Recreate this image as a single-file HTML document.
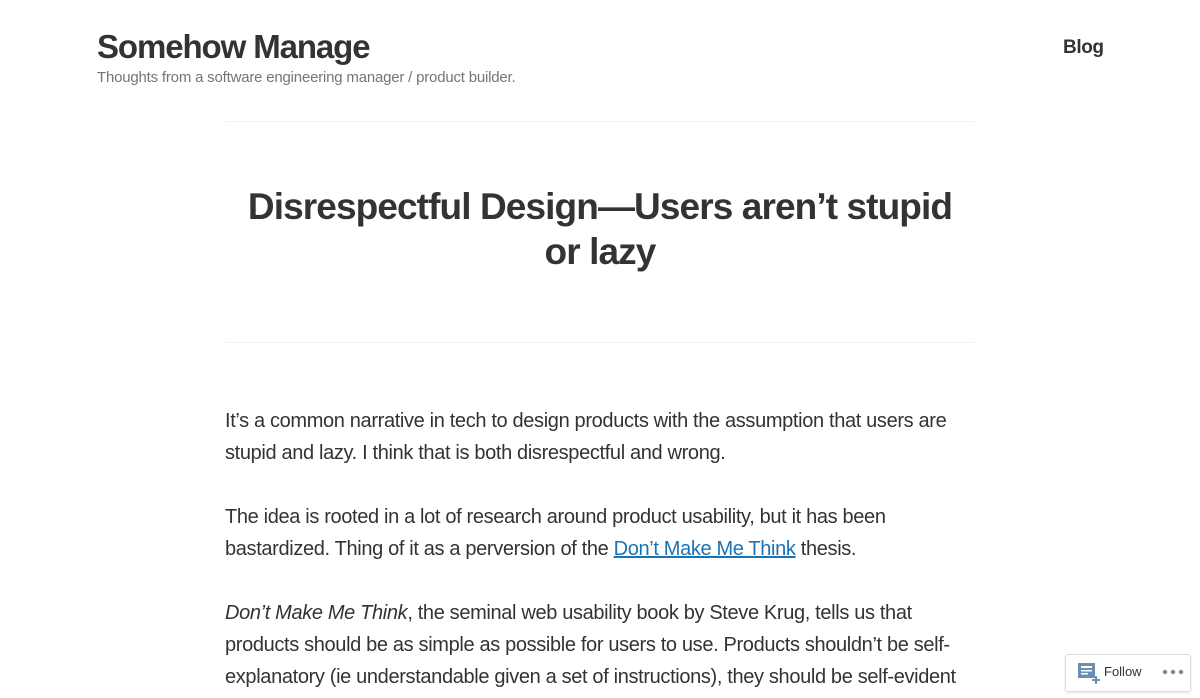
<!DOCTYPE html>
<html><head><meta charset="utf-8"><style>
body{margin:0;background:#fff;width:1200px;height:698px;overflow:hidden;font-family:"Liberation Sans",sans-serif;color:#333;position:relative}
.a{position:absolute;white-space:nowrap}
.t{left:97px;top:28px;font-size:33px;font-weight:bold;color:#333;letter-spacing:-1.1px}
.s{left:97px;top:69px;font-size:15px;color:#757575;letter-spacing:-0.2px}
.blog{left:1063px;top:37px;font-size:19px;font-weight:bold;letter-spacing:-0.4px}
.hr{position:absolute;left:225px;width:750px;height:1px;background:#f0f0f0}
.h{left:0;width:1200px;text-align:center;font-size:37px;font-weight:bold;letter-spacing:-0.9px;color:#333}
.p{left:225px;font-size:20px;letter-spacing:-0.35px;color:#333}
a{color:#1a73b5}
.f{position:absolute;left:1065px;top:654px;width:124px;height:36px;border:1px solid #ddd;border-radius:3px;background:#fff;box-shadow:0 1px 2px rgba(0,0,0,.1)}
</style></head><body>
<div class="a t">Somehow Manage</div>
<div class="a s">Thoughts from a software engineering manager / product builder.</div>
<div class="a blog">Blog</div>
<div class="hr" style="top:121px"></div>
<div class="a h" style="top:186px">Disrespectful Design—Users aren’t stupid</div>
<div class="a h" style="top:231px">or lazy</div>
<div class="hr" style="top:342px"></div>
<div class="a p" style="top:410px">It’s a common narrative in tech to design products with the assumption that users are</div>
<div class="a p" style="top:442px">stupid and lazy. I think that is both disrespectful and wrong.</div>
<div class="a p" style="top:506px">The idea is rooted in a lot of research around product usability, but it has been</div>
<div class="a p" style="top:538px">bastardized. Thing of it as a perversion of the <a href="#">Don’t Make Me Think</a> thesis.</div>
<div class="a p" style="top:602px"><i>Don’t Make Me Think</i>, the seminal web usability book by Steve Krug, tells us that</div>
<div class="a p" style="top:634px">products should be as simple as possible for users to use. Products shouldn’t be self-</div>
<div class="a p" style="top:666px">explanatory (ie understandable given a set of instructions), they should be self-evident</div>
<div class="f">
<svg style="position:absolute;left:12px;top:8px" width="24" height="22" viewBox="0 0 24 22"><rect x="0" y="0" width="17" height="15" fill="#6a8fb0"/><rect x="3" y="3" width="11" height="2" fill="#fff"/><rect x="3" y="7" width="11" height="1.5" fill="#fff"/><rect x="3" y="10" width="7" height="1.5" fill="#fff"/><path d="M18 13v8M14 17h8" stroke="#6a8fb0" stroke-width="2"/></svg>
<span style="position:absolute;left:38px;top:9px;font-size:13px;color:#333">Follow</span>
<svg style="position:absolute;left:96px;top:14px" width="22" height="6" viewBox="0 0 22 6"><circle cx="3" cy="3" r="2.2" fill="#888"/><circle cx="11" cy="3" r="2.2" fill="#888"/><circle cx="19" cy="3" r="2.2" fill="#888"/></svg>
</div>
</body></html>
